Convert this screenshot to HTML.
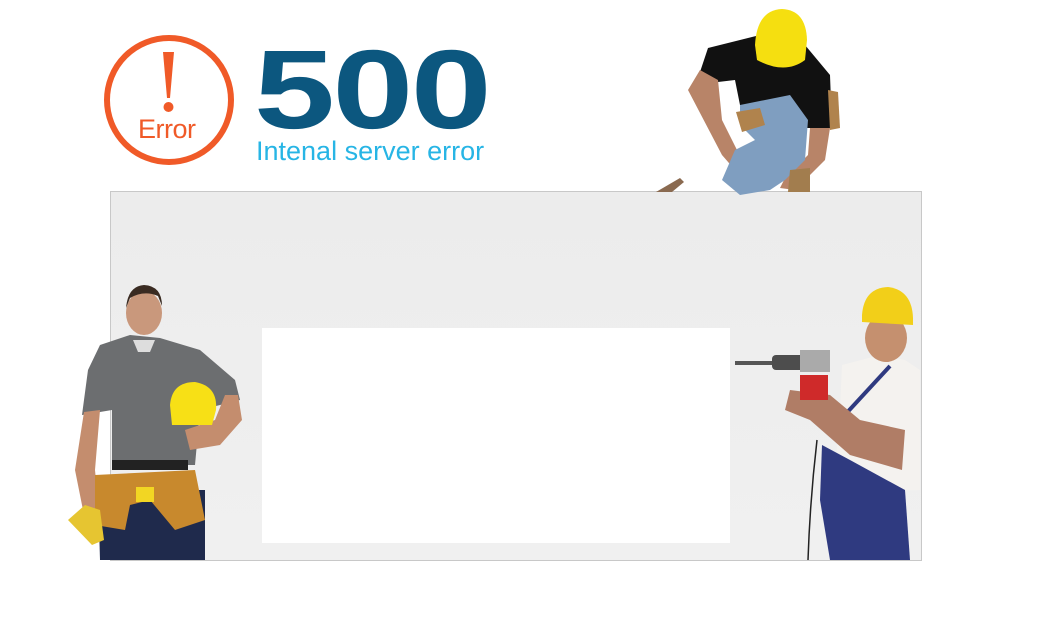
<!DOCTYPE html>
<html><head><meta charset="utf-8"><style>
html,body{margin:0;padding:0;background:#fff;width:1052px;height:622px;overflow:hidden;position:relative;font-family:"Liberation Sans",sans-serif}
.circle{position:absolute;left:104px;top:35px;width:118px;height:118px;border:6px solid #f05a28;border-radius:50%}
.err{position:absolute;left:138px;top:114px;font-size:27px;color:#f05a28;letter-spacing:-0.5px}
.big{position:absolute;left:254px;top:28px;font-size:112px;font-weight:bold;color:#0c577f;letter-spacing:-2px;line-height:124px;transform:scaleX(1.3);transform-origin:0 0}
.sub{position:absolute;left:256px;top:136px;font-size:27px;color:#27b5e5;letter-spacing:0}
.box{position:absolute;left:110px;top:191px;width:810px;height:368px;border:1px solid #c8c8c8;background:linear-gradient(#ececec,#f0f0f0)}
.white{position:absolute;left:262px;top:328px;width:468px;height:215px;background:#fff}
svg{position:absolute;left:0;top:0}
</style></head><body>
<div class="circle"></div>
<svg width="1052" height="622" style="z-index:1">
<path d="M163 52 L174 52 L170 98 L167 98 Z" fill="#f05a28"/><circle cx="168.5" cy="107" r="5" fill="#f05a28"/>
</svg>
<div class="err">Error</div>
<div class="big">500</div>
<div class="sub">Intenal server error</div>
<div class="box"></div>
<div class="white"></div>
<svg width="1052" height="622" style="z-index:2">
<path d="M100 345 L130 335 L160 338 L200 350 L235 380 L240 400 L200 410 L195 465 L112 465 L112 410 L82 415 L88 370 Z" fill="#6c6e70"/>
<path d="M84 412 L100 410 L95 470 L100 520 L85 520 L75 470 Z" fill="#c48d6e"/>
<path d="M238 395 L242 420 L220 445 L190 450 L185 430 L215 420 L225 395 Z" fill="#c48d6e"/>
<ellipse cx="144" cy="313" rx="18" ry="22" fill="#c9987c"/>
<path d="M126 308 Q128 286 144 285 Q162 286 162 306 L158 296 Q144 290 130 298 Z" fill="#3a2b22"/>
<path d="M133 340 L155 340 L150 352 L138 352 Z" fill="#ddd"/>
<path d="M170 405 Q172 382 195 382 Q218 386 216 410 L212 425 L172 425 Z" fill="#f7e016"/>
<rect x="112" y="460" width="76" height="10" fill="#222"/>
<path d="M100 560 L98 490 L205 490 L205 560 Z" fill="#1f2a4c"/>
<path d="M95 475 L195 470 L205 520 L175 530 L150 500 L130 505 L125 530 L95 525 Z" fill="#c8892d"/>
<rect x="136" y="487" width="18" height="15" fill="#f2d623"/>
<path d="M68 520 L85 505 L100 510 L104 540 L92 545 Z" fill="#e6c531"/>
<path d="M708 48 L760 35 L805 45 L830 75 L832 128 L800 128 L780 110 L740 105 L735 80 L718 82 L700 72 Z" fill="#111"/>
<path d="M700 70 L718 80 L722 120 L742 160 L735 170 L722 155 L688 90 Z" fill="#b88468"/>
<path d="M810 128 L830 128 L825 160 L795 190 L780 188 L785 178 L808 155 Z" fill="#b88468"/>
<path d="M740 105 L790 95 L808 120 L805 160 L785 180 L770 190 L740 195 L722 180 L735 150 L755 140 L740 125 Z" fill="#7f9ec0"/>
<path d="M790 170 L810 168 L810 192 L788 192 Z" fill="#a27d4e"/>
<path d="M736 112 L760 108 L765 125 L742 132 Z" fill="#b0834d"/>
<path d="M828 90 L838 92 L840 128 L830 130 Z" fill="#b0834d"/>
<path d="M755 45 Q757 10 782 9 Q806 10 807 40 L805 60 Q785 75 757 60 Z" fill="#f5df10"/>
<path d="M656 192 L680 178 L684 182 L672 192 Z" fill="#8a6a50"/>
<path d="M842 365 L880 355 L905 360 L920 370 L920 490 L860 492 L835 470 L840 410 Z" fill="#f4f2ef"/>
<path d="M822 445 L850 460 L905 490 L910 560 L830 560 L820 500 Z" fill="#2f3a80"/>
<path d="M842 418 L890 366" stroke="#2f3a80" stroke-width="4"/>
<path d="M790 390 L830 395 L860 420 L905 430 L902 470 L850 455 L810 420 L785 410 Z" fill="#b07d66"/>
<ellipse cx="886" cy="338" rx="21" ry="24" fill="#c5906f"/>
<path d="M862 315 Q864 288 888 287 Q912 290 913 318 L913 325 L862 322 Z" fill="#f2cf19"/>
<rect x="735" y="361" width="40" height="4" fill="#555"/>
<rect x="772" y="355" width="32" height="15" rx="4" fill="#4d4d4d"/>
<rect x="800" y="350" width="30" height="22" fill="#aaa"/>
<rect x="800" y="375" width="28" height="25" fill="#cf2a2a"/>
<path d="M817 440 Q810 500 808 560" stroke="#222" stroke-width="1.5" fill="none"/>
</svg>
</body></html>
